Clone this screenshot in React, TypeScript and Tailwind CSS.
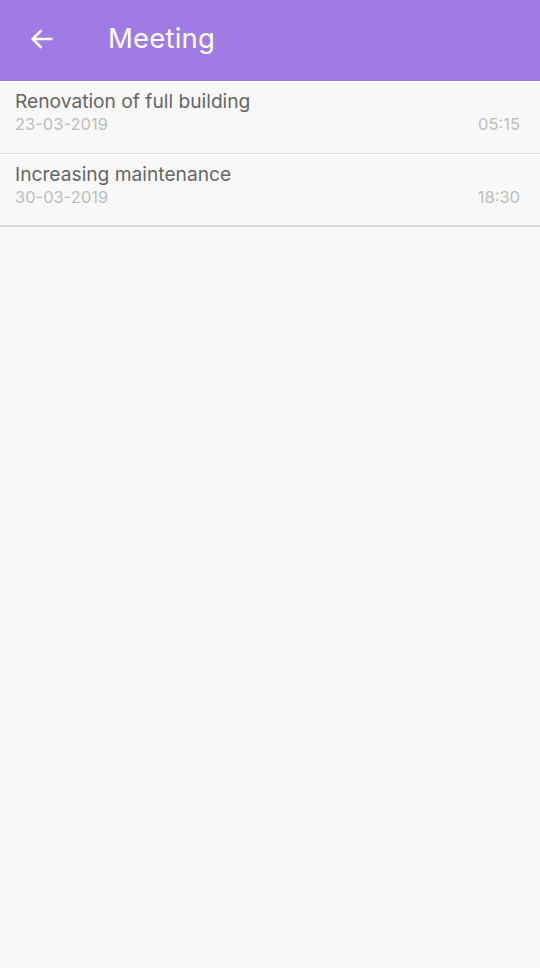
const meetings = [
  { title: 'Renovation of full building', date: '23-03-2019', time: '05:15' },
  { title: 'Increasing maintenance', date: '30-03-2019', time: '18:30' },
];

export default function App() {
  return (
    <div
      className="w-[540px] h-[968px] bg-[#f8f8f8] flex flex-col"
      style={{ fontFamily: 'Inter, "Noto Sans", sans-serif' }}
    >
      {/* App bar */}
      <div className="h-[81px] bg-[#a07be6] flex items-center shrink-0 pb-[3px]">
        <button className="w-[84px] h-full flex items-center pl-[28px] text-white">
          <svg className="w-[28px] h-[28px]" viewBox="0 0 24 24" fill="none" stroke="currentColor">
            <path strokeWidth={2.2} strokeLinecap="round" strokeLinejoin="round" d="M20 12H4M11 5l-7 7 7 7" />
          </svg>
        </button>
        <span className="ml-[24px] text-white text-[27.5px] tracking-[0.2px]">Meeting</span>
      </div>

      {/* Meeting list */}
      <div>
        {meetings.map((m, i) => (
          <div
            key={m.title}
            className={`h-[73px] px-[15px] pt-[8px] ${
              i === meetings.length - 1 ? 'border-b-2 border-[#dcdcdc]' : 'border-b border-[#dcdcdc]'
            }`}
          >
            <div className="text-[19.2px] leading-[24px] text-[#666666]">{m.title}</div>
            <div className="flex justify-between text-[16.5px] leading-[22px] text-[#bdbdbd] pr-[5px]">
              <span>{m.date}</span>
              <span>{m.time}</span>
            </div>
          </div>
        ))}
      </div>
    </div>
  );
}
